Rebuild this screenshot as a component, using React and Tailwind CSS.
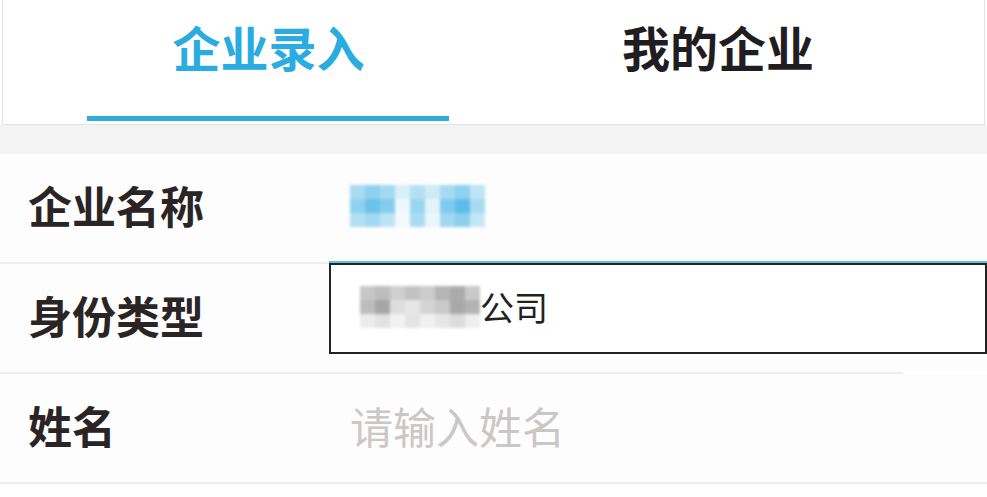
import React from 'react';

const FONT = { fontFamily: '"Noto Sans CJK SC", "Noto Sans", sans-serif' };

// pixelated mosaic used to hide the company name
const BLUE = [
  ['#a9dbf2', '#8fd0ee', '#a4d9f1', '#d9eff9', '#b4e0f4', '#cdeaf7', '#a6daf1', '#8fd1ef', '#bfe4f5'],
  ['#8fd1ef', '#6cc3ea', '#84ccee', '#eef8fc', '#9ad6f0', '#e4f3fa', '#7fcaed', '#5ebde8', '#a8dbf2'],
  ['#b3dff3', '#a2d8f1', '#bce3f5', '#f3fafd', '#a9dcf2', '#eaf6fb', '#9fd7f0', '#8ccfee', '#c4e6f6'],
];

const GRAY = [
  ['#c6c6c6', '#bdbdbd', '#cfcfcf', '#c2c2c2', '#cccccc', '#b5b5b5', '#ababab', '#c9c9c9'],
  ['#bdbdbd', '#a6a6a6', '#dedede', '#e6e6e6', '#d4d4d4', '#c9c9c9', '#a9a9a9', '#b3b3b3'],
  ['#ececec', '#e2e2e2', '#f2f2f2', '#e4e4e4', '#f0f0f0', '#e6e6e6', '#dcdcdc', '#eeeeee'],
];

function Mosaic({ rows, cell }) {
  return (
    <div className="flex flex-col blur-[1.5px]">
      {rows.map((r, i) => (
        <div key={i} className="flex">
          {r.map((c, j) => (
            <div key={j} style={{ background: c, width: cell[0], height: cell[1] }} />
          ))}
        </div>
      ))}
    </div>
  );
}

function Row({ label, children, line = 'w-full' }) {
  return (
    <div className="relative">
      <div className="flex h-[108px] items-center bg-[#fdfdfd]">
        <div className="w-[320px] pb-[7px] pl-[28px] text-[44px] font-bold leading-none text-[#2b2424]">{label}</div>
        <div className="flex-1 pl-[30px]">{children}</div>
      </div>
      <div className={`h-[2px] bg-[#f0eded] ${line}`} />
    </div>
  );
}

export default function App() {
  return (
    <div className="relative h-[497px] w-[987px] overflow-hidden bg-white" style={FONT}>
      {/* tabs */}
      <div className="mx-[2px] flex h-[125px] border-x border-b border-[#e4e4e4] bg-white">
        <div className="flex w-[531px] flex-col items-center">
          <div className="pt-[20px] text-[48px] font-bold leading-[52px] text-[#2aace0]">企业录入</div>
          <div className="mt-auto mb-[3px] ml-[-2px] h-[5px] w-[362px] bg-[#33abd9]" />
        </div>
        <div className="flex w-[368px] flex-col items-center">
          <div className="pt-[20px] text-[48px] font-bold leading-[52px] text-[#1f1d22]">我的企业</div>
        </div>
      </div>
      <div className="h-[29px] bg-[#f3f3f3]" />

      {/* form */}
      <Row label="企业名称">
        <div className="flex pb-[5px]">
          <Mosaic rows={BLUE} cell={[15, 14]} />
        </div>
      </Row>
      <Row label="身份类型" line="w-[903px]">
        <div />
      </Row>
      <Row label="姓名">
        <div className="pb-[6px] text-[43px] leading-none text-[#ccc7c7]">请输入姓名</div>
      </Row>

      {/* autocomplete dropdown */}
      <div className="absolute left-[329px] top-[261px] w-[658px] border-t-2 border-[#5cc3e2]">
        <div className="flex h-[91px] items-center border-2 border-[#232323] bg-white pb-[4px] pl-[29px]">
          <Mosaic rows={GRAY} cell={[15, 14]} />
          <span className="text-[34px] leading-none text-[#222]">公司</span>
        </div>
      </div>
    </div>
  );
}
